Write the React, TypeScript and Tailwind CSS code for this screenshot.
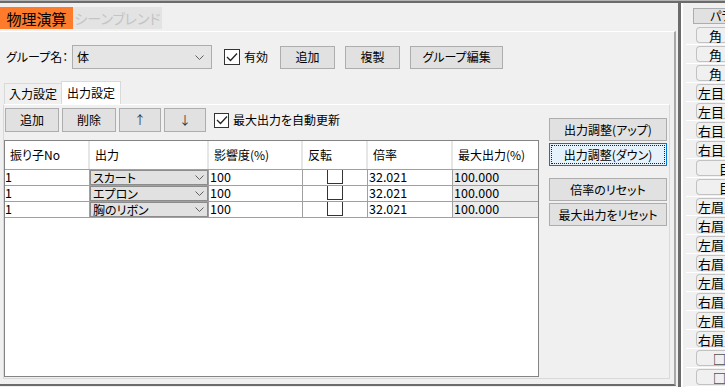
import React from 'react';

const font = "font-['Noto_Sans_CJK_JP','Noto_Sans_CJK_SC',sans-serif] [font-feature-settings:'palt']";

function Chevron() {
  return (
    <svg width="9" height="5" viewBox="0 0 9 5" className="shrink-0">
      <path d="M0.5 0.5 L4.5 4.5 L8.5 0.5" fill="none" stroke="#606060" strokeWidth="1" />
    </svg>
  );
}

function CheckBox({ size }: { size: number }) {
  return (
    <div
      className="bg-white border border-[#333] flex items-center justify-center shrink-0"
      style={{ width: size, height: size }}
    >
      <svg width="12" height="10" viewBox="0 0 12 10">
        <path d="M1 5 L4.5 8.5 L11 1.5" fill="none" stroke="#222" strokeWidth="1.3" />
      </svg>
    </div>
  );
}

const btn = 'bg-[#e1e1e1] border border-[#adadad] flex items-center justify-center leading-none';

const cols = [
  { label: '振り子No', w: 'w-[85px]' },
  { label: '出力', w: 'w-[119px]' },
  { label: '影響度(%)', w: 'w-[94px]' },
  { label: '反転', w: 'w-[65px]' },
  { label: '倍率', w: 'w-[85px]' },
  { label: '最大出力(%)', w: 'w-[85px]' },
];

const rows = ['スカート', 'エプロン', '胸のリボン'];

const morphs = [
  { t: '角', pl: 'pl-[12px]' },
  { t: '角', pl: 'pl-[12px]' },
  { t: '角', pl: 'pl-[12px]' },
  { t: '左目', pl: 'pl-[1px]' },
  { t: '左目', pl: 'pl-[1px]' },
  { t: '右目', pl: 'pl-[1px]' },
  { t: '右目', pl: 'pl-[1px]' },
  { t: '目', pl: 'pl-[22px]' },
  { t: '目', pl: 'pl-[22px]' },
  { t: '左眉', pl: 'pl-[1px]' },
  { t: '右眉', pl: 'pl-[1px]' },
  { t: '左眉', pl: 'pl-[1px]' },
  { t: '右眉', pl: 'pl-[1px]' },
  { t: '左眉', pl: 'pl-[1px]' },
  { t: '右眉', pl: 'pl-[1px]' },
  { t: '左眉', pl: 'pl-[1px]' },
  { t: '右眉', pl: 'pl-[1px]' },
  { t: '□', pl: 'pl-[16px]' },
  { t: '□', pl: 'pl-[16px]' },
];

export default function App() {
  return (
    <div className={`w-[725px] h-[387px] overflow-hidden bg-[#f0f0f0] text-black text-[12px] ${font}`}>
      <div className="h-[1px] bg-[#b4b4b4]" />
      <div className="h-[2px] bg-[#6b6b6b]" />
      <div className="flex h-[384px]">
        {/* main area */}
        <div className="w-[678px] flex flex-col">
          <div className="flex mt-[4px] h-[22px]">
            <div className="w-[73px] bg-[#ff7b2c] flex items-center justify-center text-[15px] leading-none">物理演算</div>
            <div className="w-[89px] bg-[#e3e3e3] flex items-center justify-center text-[14px] leading-none text-[#c4c4c4]">シーンブレンド</div>
          </div>

          <div className="mt-[2px] w-[676px] h-[355px] border-t border-white border-r-2 border-r-[#a8a8a8] border-b-2 border-b-[#6b6b6b] flex flex-col">
            {/* group row */}
            <div className="mt-[13px] h-[24px] flex items-center">
              <span className="ml-[6px] w-[66px] leading-none">グループ名：</span>
              <div className="w-[140px] h-[24px] bg-[#e5e5e5] border border-[#adadad] flex items-center justify-between pl-[4px] pr-[7px]">
                <span className="leading-none">体</span>
                <Chevron />
              </div>
              <div className="ml-[12px]">
                <CheckBox size={16} />
              </div>
              <span className="ml-[4px] leading-none">有効</span>
              <div className={`${btn} ml-[12px] w-[55px] h-[23px]`}>追加</div>
              <div className={`${btn} ml-[10px] w-[55px] h-[23px]`}>複製</div>
              <div className={`${btn} ml-[10px] w-[93px] h-[23px]`}>グループ編集</div>
            </div>

            {/* tab strip */}
            <div className="mt-[12px] ml-[4px] h-[23px] flex items-end">
              <div className="w-[57px] h-[21px] border-t border-l border-[#d9d9d9] flex items-center justify-center leading-none">入力設定</div>
              <div className="w-[60px] h-[23px] bg-white border-t border-l border-r border-[#d9d9d9] flex items-center justify-center leading-none">出力設定</div>
            </div>

            {/* tab page */}
            <div className="ml-[3px] w-[667px] h-[275px] border-t border-t-white border-l border-r border-b border-[#d9d9d9] flex">
              <div className="flex flex-col pt-[3px]">
                <div className="h-[24px] flex items-center">
                  <div className={`${btn} ml-[1px] w-[54px] h-[24px]`}>追加</div>
                  <div className={`${btn} ml-[3px] w-[54px] h-[24px]`}>削除</div>
                  <div className={`${btn} ml-[3px] w-[42px] h-[24px] text-[#333]`}>↑</div>
                  <div className={`${btn} ml-[3px] w-[42px] h-[24px] text-[#333]`}>↓</div>
                  <div className="ml-[8px]">
                    <CheckBox size={15} />
                  </div>
                  <span className="ml-[4px] leading-none">最大出力を自動更新</span>
                </div>

                {/* grid */}
                <div className="mt-[8px] w-[535px] h-[237px] border border-[#848484] bg-white flex flex-col">
                  <div className="h-[29px] flex border-b border-[#a0a0a0]">
                    {cols.map((c, i) => (
                      <div
                        key={c.label}
                        className={`${c.w} h-full flex items-center pl-[5px] leading-none ${i < cols.length - 1 ? 'border-r-2 border-[#e6e6e6]' : ''}`}
                      >
                        {c.label}
                      </div>
                    ))}
                  </div>
                  {rows.map((r) => (
                    <div key={r} className="h-[16px] flex border-b border-[#a0a0a0] text-[12.5px]">
                      <div className="w-[85px] border-r border-[#a0a0a0] flex items-center leading-none">1</div>
                      <div className="w-[119px] border-r border-[#a0a0a0] flex">
                        <div className="flex-1 bg-[#e1e1e1] border border-[#8c8c8c] flex items-center justify-between pl-[2px] pr-[3px] text-[12px]">
                          <span className="leading-none">{r}</span>
                          <Chevron />
                        </div>
                      </div>
                      <div className="w-[94px] border-r border-[#a0a0a0] flex items-center pl-[1px] leading-none">100</div>
                      <div className="w-[65px] border-r border-[#a0a0a0] flex justify-center">
                        <div className="w-[16px] h-[14px] bg-white border-l border-r border-b border-[#333]" />
                      </div>
                      <div className="w-[85px] border-r border-[#a0a0a0] flex items-center pl-[1px] leading-none">32.021</div>
                      <div className="w-[85px] bg-[#ececec] flex items-center pl-[1px] leading-none">100.000</div>
                    </div>
                  ))}
                </div>
              </div>

              {/* side buttons */}
              <div className="ml-[10px] mt-[13px] flex flex-col w-[118px]">
                <div className={`${btn} h-[23px]`}>出力調整(アップ)</div>
                <div className="mt-[2px] h-[23px] bg-[#e5f1fb] border border-[#0078d7] flex items-center justify-center leading-none [outline:1px_dotted_#222] [outline-offset:-3px]">
                  出力調整(ダウン)
                </div>
                <div className={`${btn} mt-[12px] h-[23px]`}>倍率のリセット</div>
                <div className={`${btn} mt-[2px] h-[23px]`}>最大出力をリセット</div>
              </div>
            </div>
          </div>
        </div>

        {/* splitter */}
        <div className="w-[3px] bg-[#6b6b6b]" />

        {/* morph panel */}
        <div className="flex-1 border-l-2 border-white flex flex-col overflow-hidden">
          <div className={`${btn} mt-[5px] ml-[10px] w-[80px] h-[20px] !justify-start pl-[16px]`}>パラメータ</div>
          <div className="mt-[2px] flex flex-col">
            {morphs.map((m, i) => (
              <div key={i} className="h-[19px] ml-[3px] border-b border-white pt-[1px]">
                <div className={`ml-[10px] w-[80px] h-[16px] rounded-l-[4px] border border-r-0 border-[#c2c2c2] flex items-center ${m.pl} text-[13px] leading-none`}>
                  {m.t}
                </div>
              </div>
            ))}
          </div>
        </div>
      </div>
    </div>
  );
}
